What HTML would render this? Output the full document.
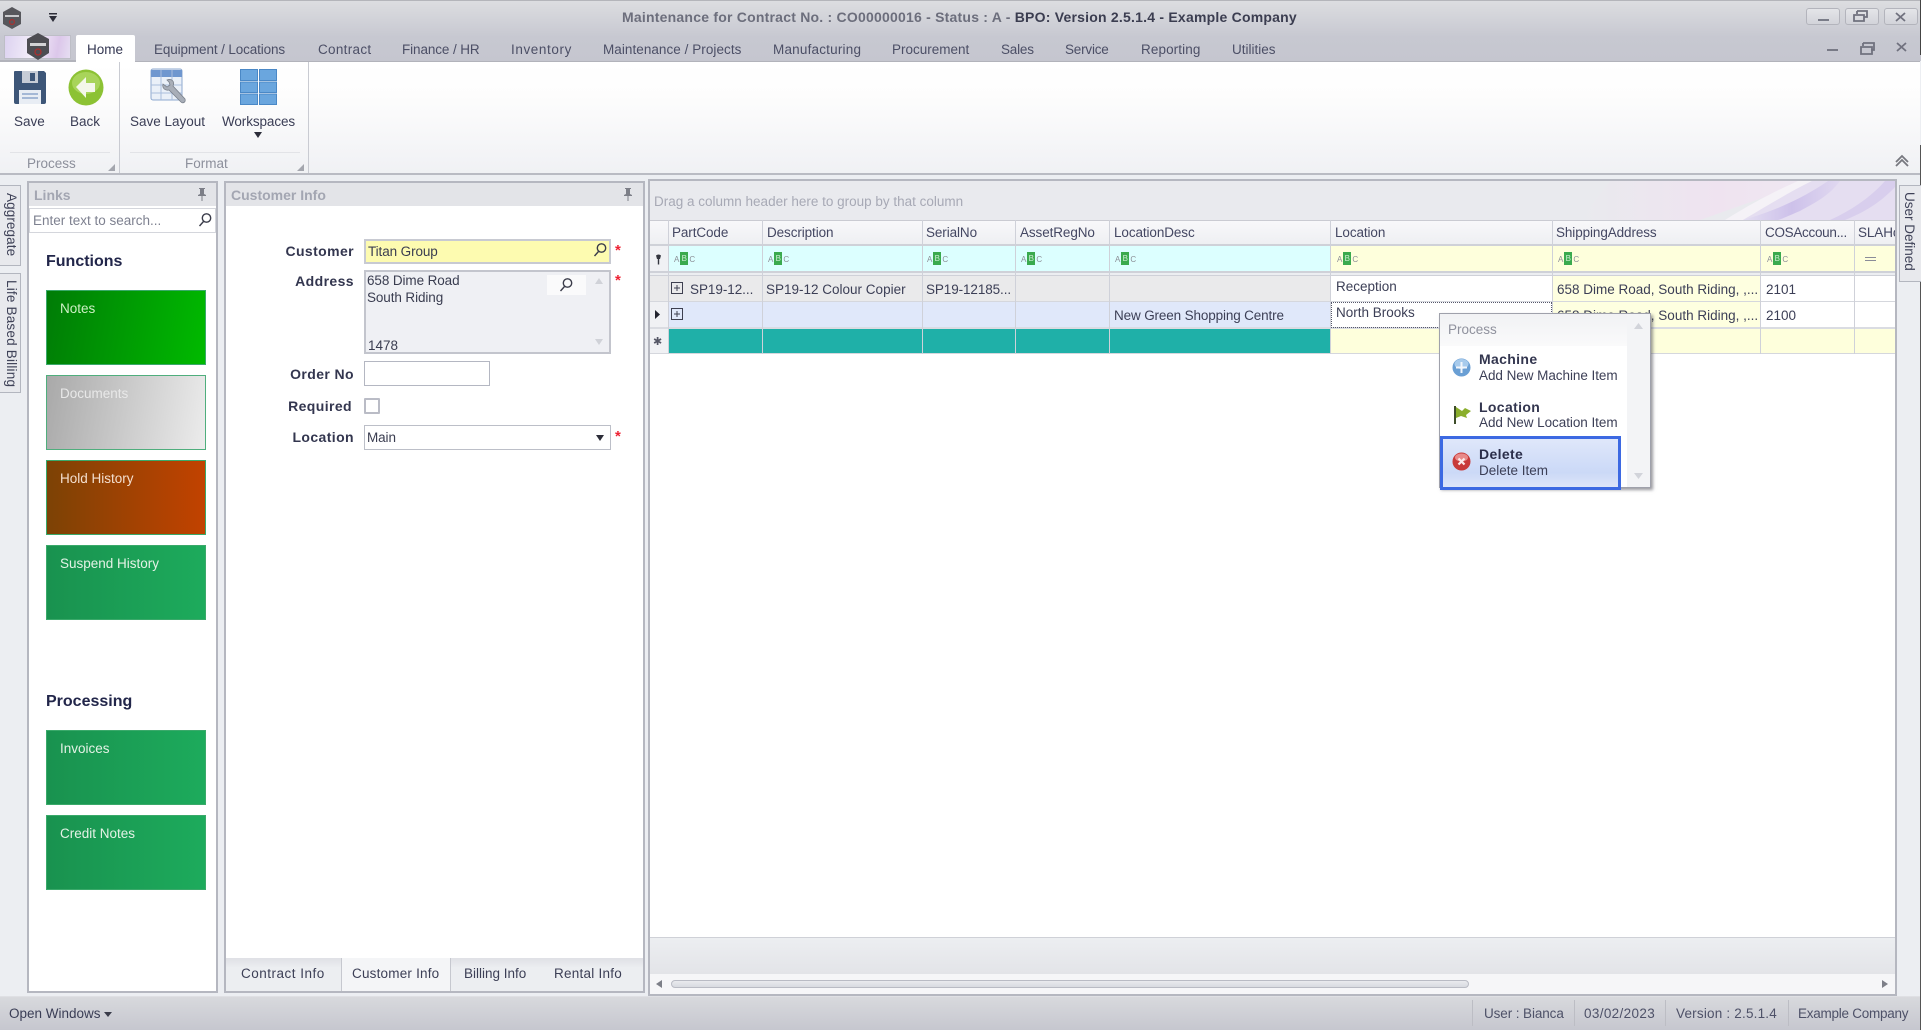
<!DOCTYPE html>
<html lang="en"><head><meta charset="utf-8"><title>Maintenance for Contract</title>
<style>
html,body{margin:0;padding:0}
body{width:1921px;height:1030px;overflow:hidden;position:relative;background:#eceef2;font-family:"Liberation Sans",sans-serif;font-size:13.5px;color:#3c3f56;filter:blur(.35px)}
div,span.t,svg{position:absolute}
.t{position:absolute;white-space:nowrap;line-height:16px}
.b{font-weight:bold}
.tab{top:42px;color:#4c4f66;font-size:13.5px}
.panel{background:#fff;border:1px solid #b5b7c0;box-sizing:border-box}
.phead{background:#e3e4e8}
.ptitle{font-weight:bold;color:#a3a6b2;font-size:14px}
.tile{left:46px;width:160px;height:75px;box-sizing:border-box;border:1px solid #3aa96a;background:linear-gradient(90deg,#19924f,#1dab5c)}
.tile span{position:absolute;left:13px;top:10px;color:#e4f2e6;font-size:13.5px;line-height:16px;white-space:nowrap}
.lab{font-weight:bold;color:#33364f;text-align:right;width:120px;left:234px;font-size:14px;letter-spacing:.4px}
.field{border:1px solid #b4b7c2;box-sizing:border-box;background:#fff;left:364px}
.ast{color:#ee2233;font-weight:bold;left:615px;font-size:15px}
.h{top:225px;color:#444762;font-size:13.5px;letter-spacing:-.1px}
.v{background:#cfd1d9;width:1px}
.abc{position:absolute;top:252px;width:24px;height:16px;font-size:8px;line-height:16px;color:#8b8e96;white-space:nowrap}
.abc i{font-style:normal;display:inline-block;width:8px;height:13px;line-height:13px;text-align:center;background:#3aaa4e;color:#cfeed5;margin:0 1px;vertical-align:1px}
.cell{font-size:13.5px;color:#3c3f56}
.vt{writing-mode:vertical-rl;white-space:nowrap;color:#3f4258;font-size:13.5px;line-height:16px;position:absolute}
.stab{background:#e8e9ed;border:1px solid #b3b6bf;box-sizing:border-box}
.st{top:1006px;color:#4e5168;font-size:13.5px}
.sep{top:1000px;height:26px;width:1px;background:#bcbdc4}
.rt{color:#3a3d55;font-size:13.5px}
.pb{color:#33364f;font-size:14px;letter-spacing:.35px}
</style></head><body>

<!-- title bar + tab row -->
<div style="left:0;top:0;width:1921px;height:61px;background:linear-gradient(180deg,#dcdde0 0,#c7c8d1 60%,#c5c6cf 100%);border-top:1px solid #b4b5ba;box-sizing:border-box"></div>
<div style="left:1920px;top:0;width:1px;height:55px;background:#444"></div>
<div style="left:1920px;top:145px;width:1px;height:885px;background:#555"></div>

<svg style="left:2px;top:7px" width="20" height="22" viewBox="0 0 20 22"><path d="M10 0 19 5v12l-9 5-9-5V5z" fill="#57575c"/><path d="M3 8h14v2H3z" fill="#c9c9cc"/><circle cx="10" cy="15" r="2.4" fill="none" stroke="#a83030" stroke-width="1.2"/></svg>
<svg style="left:48px;top:13px" width="10" height="10" viewBox="0 0 10 10"><path d="M1 0h8v1.500H1z M1 3h8L5 9z" fill="#2c2d38"/></svg>

<span class="t b" style="left:622px;top:9px;font-size:14px;color:#6c6e7c;letter-spacing:.22px">Maintenance for Contract No. : CO00000016 - Status : A - <span style="color:#3b3d50">BPO: Version 2.5.1.4 - Example Company</span></span>

<!-- window buttons -->
<div style="left:1806px;top:8px;width:34px;height:17px;box-sizing:border-box;border:1px solid #b3b4bc;border-radius:3px;background:linear-gradient(#e4e5e8,#d2d3d9)"></div>
<div style="left:1845px;top:8px;width:34px;height:17px;box-sizing:border-box;border:1px solid #b3b4bc;border-radius:3px;background:linear-gradient(#e4e5e8,#d2d3d9)"></div>
<div style="left:1884px;top:8px;width:34px;height:17px;box-sizing:border-box;border:1px solid #b3b4bc;border-radius:3px;background:linear-gradient(#e4e5e8,#d2d3d9)"></div>
<svg style="left:1800px;top:6px" width="121" height="50" viewBox="0 0 121 50" fill="none" stroke="#70717e" stroke-width="1.800"><path d="M18 14h11"/><path d="M57 5h10v6h-3 M57 5v3 M54 9h10v6H54z"/><path d="M96 7l9 8 M105 7l-9 8"/><path d="M27 44h11" /><path d="M63 37h11v7h-3 M63 37v3 M61 41h11v7H61z"/><path d="M97 37l9 8 M106 37l-9 8"/></svg>

<!-- app button -->
<div style="left:4px;top:35px;width:67px;height:24px;box-sizing:border-box;border:1px solid #bdbec6;background:linear-gradient(100deg,#dcd2f0,#f4effa 45%,#dcc7ea 80%,#e6def2)"></div>
<svg style="left:26px;top:33px" width="24" height="27" viewBox="0 0 24 27"><path d="M12 0 23 6v14l-11 7-11-7V6z" fill="#4d4d52"/><path d="M4 10h16v3H4z" fill="#d2d2d4"/><circle cx="12" cy="19" r="3" fill="none" stroke="#a83030" stroke-width="1.300"/></svg>

<!-- tabs -->
<div style="left:76px;top:35px;width:59px;height:27px;background:#fff;border-radius:2px 2px 0 0"></div>
<span class="t tab" style="left:87px;color:#343752">Home</span>
<span class="t tab" style="left:154px;letter-spacing:-.12px">Equipment / Locations</span>
<span class="t tab" style="left:318px;letter-spacing:.3px">Contract</span>
<span class="t tab" style="left:402px;letter-spacing:-.1px">Finance / HR</span>
<span class="t tab" style="left:511px;letter-spacing:.6px">Inventory</span>
<span class="t tab" style="left:603px;letter-spacing:.05px">Maintenance / Projects</span>
<span class="t tab" style="left:773px;letter-spacing:.2px">Manufacturing</span>
<span class="t tab" style="left:892px">Procurement</span>
<span class="t tab" style="left:1001px;letter-spacing:-.2px">Sales</span>
<span class="t tab" style="left:1065px;letter-spacing:-.2px">Service</span>
<span class="t tab" style="left:1141px;letter-spacing:.1px">Reporting</span>
<span class="t tab" style="left:1232px">Utilities</span>

<!-- ribbon -->
<div style="left:0;top:61px;width:1920px;height:114px;background:linear-gradient(180deg,#fff 0,#fdfdfd 30%,#f0f1f4 100%);border-top:1px solid #b2b3bb;border-bottom:2px solid #b9bbc3;box-sizing:border-box"></div>
<div style="left:0;top:60px;width:76px;height:1px;background:#b2b3bb"></div>
<div style="left:76px;top:60px;width:59px;height:2px;background:#fff"></div>
<div style="left:119px;top:62px;width:1px;height:111px;background:#c9cbd2"></div>
<div style="left:308px;top:62px;width:1px;height:111px;background:#c9cbd2"></div>
<div style="left:10px;top:152px;width:100px;height:1px;background:#e2e3e7"></div>
<div style="left:130px;top:152px;width:170px;height:1px;background:#e2e3e7"></div>

<svg style="left:13px;top:70px" width="34" height="35" viewBox="0 0 34 35"><path d="M1 2Q1 1 2 1h29l2 2v29q0 2-2 2H3q-2 0-2-2z" fill="#3d5678"/><path d="M9 1h16v12H9z" fill="#c6ccd6"/><path d="M17 3h5v8h-5z" fill="#3d5678"/><path d="M6 20h22v14H6z" fill="#e8edf4"/><path d="M9 24h16M9 28h16" stroke="#8da7cc" stroke-width="1.500"/></svg>
<svg style="left:68px;top:69px" width="36" height="37" viewBox="0 0 36 37"><ellipse cx="18" cy="18.500" rx="17.500" ry="18" fill="#8cc234"/><ellipse cx="18" cy="14" rx="14" ry="11" fill="#a8d45a"/><path d="M8 18 18 8v6h9v9h-9v6z" fill="#f4f7ea"/></svg>
<svg style="left:150px;top:68px" width="38" height="38" viewBox="0 0 38 38"><rect x="1" y="1" width="31" height="31" rx="2" fill="#eaf0f8" stroke="#8ea9cf"/><path d="M1 2h31v7H1z" fill="#6f97cf"/><path d="M11 2v30M22 2v30M1 17h31M1 25h31" stroke="#a9bedd"/><path d="M17 12c5-2 8 2 6 6l12 13c1 3-2 5-4 3L19 22c-4 1-7-2-6-6l4 3 3-2-1-3z" fill="#a8aeb8" stroke="#7a818c" stroke-width=".8"/></svg>
<svg style="left:240px;top:69px" width="37" height="36" viewBox="0 0 37 36" fill="#6aa6de" stroke="#4a88c6"><rect x=".5" y=".5" width="17" height="11"/><rect x="19.500" y=".5" width="17" height="11"/><rect x=".5" y="13" width="17" height="10.500"/><rect x="19.500" y="13" width="17" height="10.500"/><rect x=".5" y="25" width="17" height="10.500"/><rect x="19.500" y="25" width="17" height="10.500"/></svg>

<span class="t rt" style="left:14px;top:114px">Save</span>
<span class="t rt" style="left:70px;top:114px">Back</span>
<span class="t rt" style="left:130px;top:114px">Save Layout</span>
<span class="t rt" style="left:222px;top:114px;letter-spacing:-.1px">Workspaces</span>
<svg style="left:254px;top:132px" width="8" height="6" viewBox="0 0 8 6"><path d="M0 0h8L4 6z" fill="#2d2e3a"/></svg>
<span class="t" style="left:27px;top:156px;color:#8c8f9b">Process</span>
<span class="t" style="left:185px;top:156px;color:#8c8f9b">Format</span>
<svg style="left:108px;top:164px" width="7" height="7" viewBox="0 0 7 7"><path d="M7 0v7H0z" fill="#a4a6ae"/></svg>
<svg style="left:297px;top:164px" width="7" height="7" viewBox="0 0 7 7"><path d="M7 0v7H0z" fill="#a4a6ae"/></svg>
<svg style="left:1894px;top:154px" width="16" height="14" viewBox="0 0 16 14" fill="none" stroke="#77787f" stroke-width="1.800"><path d="M2 8 8 2l6 6M2 12l6-6 6 6"/></svg>

<!-- left vertical tabs -->
<div class="stab" style="left:-1px;top:185px;width:22px;height:81px"></div>
<span class="vt" style="left:3px;top:193px;letter-spacing:.1px">Aggregate</span>
<div class="stab" style="left:-1px;top:273px;width:22px;height:120px"></div>
<span class="vt" style="left:3px;top:280px;letter-spacing:.2px">Life Based Billing</span>

<!-- links panel -->
<div class="panel" style="left:27px;top:181px;width:191px;height:812px;border-width:2px"></div>
<div class="phead" style="left:29px;top:183px;width:187px;height:23px"></div>
<span class="t ptitle" style="left:34px;top:187px">Links</span>
<svg style="left:197px;top:188px" width="10" height="13" viewBox="0 0 10 13" fill="#7d7f88"><path d="M2 0h6v1H7v5l2 1v1H5.500v5h-1V8H1V7l2-1V1H2z"/></svg>
<div class="field" style="left:29px;top:208px;width:187px;height:25px;border-color:#d4d6dc"></div>
<span class="t" style="left:33px;top:213px;color:#7e8190">Enter text to search...</span>
<svg style="left:197px;top:212px" width="16" height="16" viewBox="0 0 16 16" fill="none" stroke="#3a3c4a" stroke-width="1.400"><circle cx="9.500" cy="6" r="4.200"/><path d="M6.500 9.500 2.500 14"/></svg>

<span class="t b" style="left:46px;top:253px;font-size:16px;color:#22264a;line-height:18px">Functions</span>
<div class="tile" style="top:290px;background:linear-gradient(100deg,#007c06,#00ba00)"><span style="color:#cdf0c4">Notes</span></div>
<div class="tile" style="top:375px;background:linear-gradient(100deg,#a9a9a9,#ececec);border-color:#4fae7d"><span style="color:#e8e8e8">Documents</span></div>
<div class="tile" style="top:460px;background:linear-gradient(90deg,#7c4205,#c24200)"><span style="color:#f4dfcf">Hold History</span></div>
<div class="tile" style="top:545px"><span>Suspend History</span></div>
<span class="t b" style="left:46px;top:693px;font-size:16px;color:#22264a;line-height:18px">Processing</span>
<div class="tile" style="top:730px"><span>Invoices</span></div>
<div class="tile" style="top:815px"><span>Credit Notes</span></div>

<!-- customer info -->
<div class="panel" style="left:224px;top:181px;width:421px;height:812px;border-width:2px"></div>
<div class="phead" style="left:226px;top:183px;width:417px;height:23px"></div>
<span class="t ptitle" style="left:231px;top:187px">Customer Info</span>
<svg style="left:623px;top:188px" width="10" height="13" viewBox="0 0 10 13" fill="#7d7f88"><path d="M2 0h6v1H7v5l2 1v1H5.500v5h-1V8H1V7l2-1V1H2z"/></svg>

<span class="t lab" style="top:243px">Customer</span>
<div class="field" style="top:239px;width:247px;height:25px;background:#fdfbb0;border:2px solid #c8cad2"></div>
<span class="t" style="left:368px;top:244px;color:#3a3d50;letter-spacing:-.1px">Titan Group</span>
<svg style="left:592px;top:242px" width="16" height="16" viewBox="0 0 16 16" fill="none" stroke="#3a3c4a" stroke-width="1.400"><circle cx="9.500" cy="6" r="4.200"/><path d="M6.500 9.500 2.500 14"/></svg>
<span class="t ast" style="top:243px">*</span>

<span class="t lab" style="top:273px">Address</span>
<div class="field" style="top:270px;width:247px;height:84px;background:#eff0f4;border:2px solid #c3c5cd"></div>
<span class="t" style="left:367px;top:273px;color:#3a3d50;letter-spacing:-.1px">658 Dime Road</span>
<span class="t" style="left:367px;top:290px;color:#3a3d50;letter-spacing:-.1px">South Riding</span>
<span class="t" style="left:368px;top:338px;color:#3a3d50">1478</span>
<div style="left:547px;top:275px;width:39px;height:20px;background:#fafafb"></div>
<svg style="left:558px;top:277px" width="16" height="16" viewBox="0 0 16 16" fill="none" stroke="#3a3c4a" stroke-width="1.400"><circle cx="9.500" cy="6" r="4.200"/><path d="M6.500 9.500 2.500 14"/></svg>
<svg style="left:595px;top:278px" width="8" height="6" viewBox="0 0 8 6"><path d="M4 0l4 6H0z" fill="#d0d2d8"/></svg>
<svg style="left:595px;top:339px" width="8" height="6" viewBox="0 0 8 6"><path d="M0 0h8L4 6z" fill="#d0d2d8"/></svg>
<span class="t ast" style="top:273px">*</span>

<span class="t lab" style="top:366px">Order No</span>
<div class="field" style="top:361px;width:126px;height:25px;border-width:1px"></div>

<span class="t lab" style="top:398px;left:232px">Required</span>
<div style="left:364px;top:398px;width:16px;height:16px;box-sizing:border-box;border:2px solid #babcc6;background:#fff;border-radius:1px"></div>

<span class="t lab" style="top:429px">Location</span>
<div class="field" style="top:425px;width:247px;height:25px;border:1px solid #bcbfc8"></div>
<span class="t" style="left:367px;top:430px;color:#3a3d50;letter-spacing:-.1px">Main</span>
<svg style="left:596px;top:435px" width="8" height="6" viewBox="0 0 8 6"><path d="M0 0h8L4 6z" fill="#2c2d38"/></svg>
<span class="t ast" style="top:429px">*</span>

<!-- bottom tabs -->
<div style="left:226px;top:958px;width:417px;height:33px;background:linear-gradient(#dfe0e5,#eceef1 30%)"></div>
<div style="left:341px;top:958px;width:110px;height:33px;background:#f4f5f7;border-left:1px solid #c6c8cf;border-right:1px solid #c6c8cf;box-sizing:border-box"></div>
<span class="t" style="left:241px;top:966px;letter-spacing:.5px">Contract Info</span>
<span class="t" style="left:352px;top:966px;letter-spacing:.2px">Customer Info</span>
<span class="t" style="left:464px;top:966px">Billing Info</span>
<span class="t" style="left:554px;top:966px;letter-spacing:.25px">Rental Info</span>

<!-- grid -->
<div class="panel" style="left:648px;top:179px;width:1249px;height:817px;border-width:2px"></div>
<div style="left:650px;top:181px;width:1245px;height:39px;background:#e9eaee;overflow:hidden">
<svg style="left:0;top:0" width="1245" height="39" viewBox="0 0 1245 39"><defs><linearGradient id="a" x1="0" x2="1"><stop offset="0" stop-color="#e9eaee"/><stop offset=".6" stop-color="#efe3f0"/><stop offset="1" stop-color="#efe8f2"/></linearGradient><linearGradient id="b" x1="0" x2="1"><stop offset="0" stop-color="#e4def2"/><stop offset=".5" stop-color="#cdc1ea"/><stop offset="1" stop-color="#e0d8f0"/></linearGradient></defs><path d="M960 0h200L1050 39H930z" fill="url(#a)"/><path d="M1075 39C1105 20 1130 8 1148 0h14L1093 39z" fill="#f5f2f7"/><path d="M1093 39C1125 20 1145 8 1162 0h83v39z" fill="#e5def1"/><path d="M1093 39C1125 30 1150 18 1172 4l6-4h12c-12 16-26 22-40 30-12 5-18 8-22 9z" fill="url(#b)"/><path d="M1180 39c20-9 40-22 55-39h10v6c-14 15-30 25-50 33z" fill="#d8ceed"/></svg>
</div>
<span class="t" style="left:654px;top:194px;color:#a7a9b5">Drag a column header here to group by that column</span>

<div style="left:650px;top:220px;width:1245px;height:25px;background:linear-gradient(#f8f8fa,#eeeff2);border-top:1px solid #cacbd2;box-sizing:border-box"></div>
<div style="left:668px;top:245px;width:662px;height:27px;background:#dcffff"></div>
<div style="left:1330px;top:245px;width:565px;height:27px;background:#feffdc"></div>
<div style="left:650px;top:245px;width:18px;height:27px;background:#f0f1f4"></div>
<div style="left:650px;top:244px;width:1245px;height:2px;background:#cfd1d8"></div>
<div style="left:650px;top:271px;width:1245px;height:2px;background:#cfd1d8"></div>
<div style="left:650px;top:273px;width:1245px;height:3px;background:#eceef1"></div>
<div style="left:650px;top:275px;width:1245px;height:1px;background:#cfd1d8"></div>

<!-- rows -->
<div style="left:650px;top:276px;width:680px;height:26px;background:#eaeaeb"></div>
<div style="left:1330px;top:276px;width:222px;height:26px;background:#fff"></div>
<div style="left:1552px;top:276px;width:208px;height:26px;background:#feffe0"></div>
<div style="left:1760px;top:276px;width:135px;height:26px;background:#fff"></div>
<div style="left:668px;top:302px;width:662px;height:26px;background:#e0e8fa"></div>
<div style="left:650px;top:302px;width:18px;height:26px;background:#f0f1f4"></div>
<div style="left:1330px;top:302px;width:222px;height:26px;background:#fff"></div>
<div style="left:1552px;top:302px;width:208px;height:26px;background:#feffe0"></div>
<div style="left:1760px;top:302px;width:135px;height:26px;background:#fff"></div>
<div style="left:650px;top:328px;width:18px;height:26px;background:#f0f1f4"></div>
<div style="left:668px;top:328px;width:662px;height:26px;background:#1fb0a8"></div>
<div style="left:1330px;top:328px;width:565px;height:26px;background:#feffdc"></div>
<div style="left:650px;top:301px;width:1245px;height:1px;background:#d5d7dd"></div>
<div style="left:650px;top:327px;width:1245px;height:2px;background:#dadce2"></div>
<div style="left:650px;top:353px;width:1245px;height:1px;background:#d5d7dd"></div>

<!-- column lines -->
<div class="v" style="left:668px;top:220px;height:134px"></div>
<div class="v" style="left:762px;top:220px;height:134px"></div>
<div class="v" style="left:922px;top:220px;height:134px"></div>
<div class="v" style="left:1015px;top:220px;height:134px"></div>
<div class="v" style="left:1109px;top:220px;height:134px"></div>
<div class="v" style="left:1330px;top:220px;height:134px"></div>
<div class="v" style="left:1552px;top:220px;height:134px"></div>
<div class="v" style="left:1760px;top:220px;height:134px"></div>
<div class="v" style="left:1854px;top:220px;height:134px"></div>

<span class="t h" style="left:672px">PartCode</span>
<span class="t h" style="left:767px">Description</span>
<span class="t h" style="left:926px">SerialNo</span>
<span class="t h" style="left:1020px">AssetRegNo</span>
<span class="t h" style="left:1114px">LocationDesc</span>
<span class="t h" style="left:1335px">Location</span>
<span class="t h" style="left:1556px">ShippingAddress</span>
<span class="t h" style="left:1765px;letter-spacing:-.3px">COSAccoun...</span>
<div style="left:1855px;top:221px;width:40px;height:22px;overflow:hidden"><span class="t h" style="left:3px;top:4px">SLAHours</span></div>

<svg style="left:655px;top:254px" width="7" height="11" viewBox="0 0 7 11"><path d="M1 1.500Q3.500-.5 6 1.500L5 5H2z" fill="#34363f"/><path d="M2.800 5h1.400v5.500H2.800z" fill="#34363f"/></svg>
<span class="abc" style="left:674px">A<i>B</i>C</span>
<span class="abc" style="left:768px">A<i>B</i>C</span>
<span class="abc" style="left:927px">A<i>B</i>C</span>
<span class="abc" style="left:1021px">A<i>B</i>C</span>
<span class="abc" style="left:1115px">A<i>B</i>C</span>
<span class="abc" style="left:1337px">A<i>B</i>C</span>
<span class="abc" style="left:1558px">A<i>B</i>C</span>
<span class="abc" style="left:1767px">A<i>B</i>C</span>
<div style="left:1865px;top:257px;width:11px;height:1px;background:#8a8c98"></div>
<div style="left:1865px;top:260px;width:11px;height:1px;background:#8a8c98"></div>

<svg style="left:671px;top:282px" width="13" height="13" viewBox="0 0 13 13" fill="none" stroke="#3e4050"><rect x=".5" y=".5" width="11" height="11"/><path d="M3 6h6M6 3v6"/></svg>
<span class="t cell" style="left:690px;top:282px;letter-spacing:-.05px">SP19-12...</span>
<span class="t cell" style="left:766px;top:282px">SP19-12 Colour Copier</span>
<span class="t cell" style="left:926px;top:282px;letter-spacing:-.1px">SP19-12185...</span>
<span class="t cell" style="left:1336px;top:279px">Reception</span>
<span class="t cell" style="left:1557px;top:282px">658 Dime Road, South Riding, ,...</span>
<span class="t cell" style="left:1766px;top:282px">2101</span>

<svg style="left:655px;top:310px" width="5" height="9" viewBox="0 0 5 9"><path d="M0 0l5 4.500L0 9z" fill="#22232e"/></svg>
<svg style="left:671px;top:308px" width="13" height="13" viewBox="0 0 13 13" fill="none" stroke="#3e4050"><rect x=".5" y=".5" width="11" height="11"/><path d="M3 6h6M6 3v6"/></svg>
<span class="t cell" style="left:1114px;top:308px;letter-spacing:-.14px">New Green Shopping Centre</span>
<div style="left:1331px;top:302px;width:221px;height:26px;box-sizing:border-box;border:1px dotted #55576a"></div>
<span class="t cell" style="left:1336px;top:305px">North Brooks</span>
<span class="t cell" style="left:1557px;top:308px">658 Dime Road, South Riding, ,...</span>
<span class="t cell" style="left:1766px;top:308px">2100</span>
<span class="t" style="left:653px;top:334px;color:#555766;font-size:11px;font-family:'DejaVu Sans',sans-serif">✱</span>

<!-- grid footer + scrollbar -->
<div style="left:650px;top:937px;width:1245px;height:37px;background:linear-gradient(#eceef1,#e3e4e8);border-top:1px solid #cfd1d7;box-sizing:border-box"></div>
<div style="left:650px;top:974px;width:1245px;height:20px;background:#f6f6f8"></div>
<div style="left:671px;top:980px;width:798px;height:8px;box-sizing:border-box;border:1px solid #b9bbc4;border-radius:4px;background:linear-gradient(#e9eaee,#d8dae0)"></div>
<svg style="left:656px;top:980px" width="6" height="8" viewBox="0 0 6 8"><path d="M6 0v8L0 4z" fill="#7d7f88"/></svg>
<svg style="left:1882px;top:980px" width="6" height="8" viewBox="0 0 6 8"><path d="M0 0v8l6-4z" fill="#7d7f88"/></svg>

<!-- right tab -->
<div class="stab" style="left:1899px;top:185px;width:23px;height:97px"></div>
<span class="vt" style="left:1901px;top:192px">User Defined</span>

<!-- popup -->
<div style="left:1439px;top:313px;width:212px;height:175px;background:#fff;border:1px solid #9fa1ab;box-sizing:border-box;box-shadow:2px 2px 3px rgba(70,70,80,.55)"></div>
<div style="left:1440px;top:314px;width:187px;height:32px;background:linear-gradient(#f1f2f4,#fafafb)"></div>
<div style="left:1627px;top:314px;width:23px;height:173px;background:#f3f4f6"></div>
<svg style="left:1634px;top:323px" width="9" height="6" viewBox="0 0 9 6"><path d="M4.500 0 9 6H0z" fill="#d2d4da"/></svg>
<svg style="left:1634px;top:473px" width="9" height="6" viewBox="0 0 9 6"><path d="M0 0h9L4.500 6z" fill="#d2d4da"/></svg>
<span class="t" style="left:1448px;top:322px;color:#8f919d">Process</span>
<span class="t b pb" style="left:1479px;top:351px">Machine</span>
<span class="t" style="left:1479px;top:368px;color:#3c3f56;letter-spacing:-.05px">Add New Machine Item</span>
<svg style="left:1452px;top:358px" width="19" height="19" viewBox="0 0 19 19"><circle cx="9.500" cy="9.500" r="9" fill="#6a9fd4"/><ellipse cx="9.500" cy="6" rx="7" ry="5" fill="#a8cbec"/><path d="M8.500 4h2v4.500H15v2h-4.500V15h-2v-4.500H4v-2h4.500z" fill="#f2f6fb"/></svg>
<span class="t b pb" style="left:1479px;top:399px">Location</span>
<span class="t" style="left:1479px;top:415px;color:#3c3f56;letter-spacing:-.05px">Add New Location Item</span>
<svg style="left:1453px;top:405px" width="19" height="20" viewBox="0 0 19 20"><path d="M1 1h2v18H1z" fill="#3e4d2a"/><path d="M3 2l6 4 3-3 6 3-5 4 1 3-6-2-5 2z" fill="#8aae2c"/></svg>
<div style="left:1440px;top:436px;width:181px;height:54px;box-sizing:border-box;border:3px solid #3c69e2;background:linear-gradient(#dfe7fa,#cbd9f7 70%,#dde5f8)"></div>
<span class="t b pb" style="left:1479px;top:446px;color:#2b2e4a">Delete</span>
<span class="t" style="left:1479px;top:463px;color:#3c3f56">Delete Item</span>
<svg style="left:1452px;top:452px" width="19" height="19" viewBox="0 0 19 19"><circle cx="9.500" cy="9.500" r="9" fill="#c83a3a"/><ellipse cx="9.500" cy="5.500" rx="6.500" ry="4" fill="#e88a8a"/><path d="M6.500 6.500l6 6M12.500 6.500l-6 6" stroke="#fbeaea" stroke-width="2.200"/></svg>

<!-- status bar -->
<div style="left:0;top:996px;width:1920px;height:34px;background:linear-gradient(#d8d9dd,#c6c7cf);border-top:1px solid #dfe0e4;box-sizing:border-box"></div>
<span class="t st" style="left:9px;color:#3a3d55">Open Windows</span>
<svg style="left:104px;top:1012px" width="8" height="5" viewBox="0 0 8 5"><path d="M0 0h8L4 5z" fill="#3a3c4a"/></svg>
<div class="sep" style="left:1472px"></div>
<div class="sep" style="left:1574px"></div>
<div class="sep" style="left:1665px"></div>
<div class="sep" style="left:1788px"></div>
<span class="t st" style="left:1484px;letter-spacing:-.1px">User : Bianca</span>
<span class="t st" style="left:1584px;letter-spacing:.35px">03/02/2023</span>
<span class="t st" style="left:1676px;letter-spacing:.2px">Version : 2.5.1.4</span>
<span class="t st" style="left:1798px;letter-spacing:-.25px">Example Company</span>
</body></html>
